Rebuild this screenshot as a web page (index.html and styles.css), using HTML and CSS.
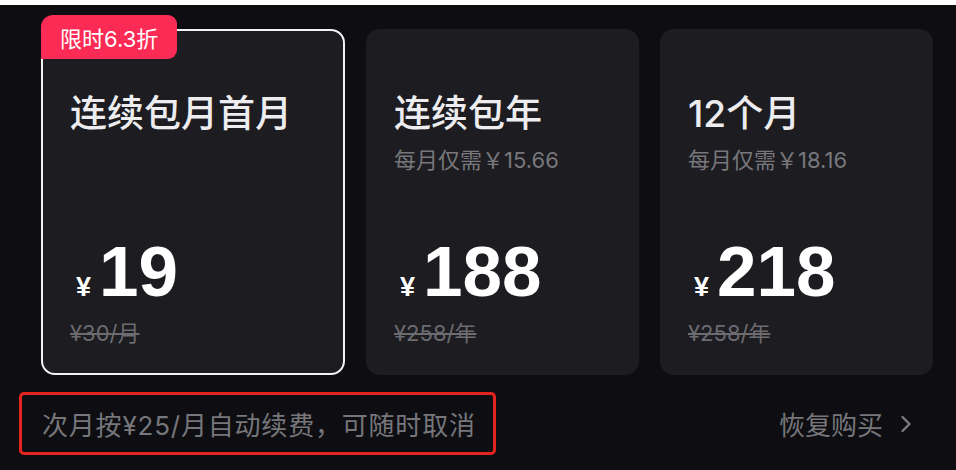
FILE: index.html
```html
<!DOCTYPE html>
<html lang="zh-CN">
<head>
<meta charset="utf-8">
<title>会员套餐</title>
<link rel="stylesheet" href="styles.css">
</head>
<body>
<div class="page">
  <div class="plans">
    <div class="card card-wide selected">
      <div class="badge">限时6.3折</div>
      <div class="title">连续包月首月</div>
      <div class="sub"></div>
      <div class="price"><span class="yen">¥</span><span class="num">19</span></div>
      <div class="orig">¥30/月</div>
    </div>
    <div class="card">
      <div class="title">连续包年</div>
      <div class="sub">每月仅需￥15.66</div>
      <div class="price"><span class="yen">¥</span><span class="num">188</span></div>
      <div class="orig">¥258/年</div>
    </div>
    <div class="card">
      <div class="title">12个月</div>
      <div class="sub">每月仅需￥18.16</div>
      <div class="price"><span class="yen">¥</span><span class="num">218</span></div>
      <div class="orig">¥258/年</div>
    </div>
  </div>
  <div class="footer">
    <div class="notice">次月按¥25/月自动续费，可随时取消</div>
    <div class="restore">恢复购买<svg class="chev" width="12" height="18" viewBox="0 0 12 18"><polyline points="2.5,2 9.5,9 2.5,16" fill="none" stroke="#7a7a7f" stroke-width="2.4" stroke-linecap="round" stroke-linejoin="round"/></svg></div>
  </div>
</div>
</body>
</html>
```
FILE: styles.css
```css
html, body {
  margin: 0;
  padding: 0;
  background: #ffffff;
}
body {
  font-family: Inter, "Noto Sans CJK SC", sans-serif;
}
.page {
  margin-top: 5px;
  height: 465px;
  background: #0e0e12;
  overflow: hidden;
}
.plans {
  display: flex;
  gap: 21px;
  padding: 24px 0 0 41px;
}
.card {
  position: relative;
  box-sizing: border-box;
  width: 273px;
  height: 346px;
  border: 2px solid transparent;
  border-radius: 14px;
  background: #1c1c21;
  padding: 0 26px;
  display: flex;
  flex-direction: column;
}
.card-wide {
  width: 304px;
  padding: 0 27px;
}
.selected {
  border-color: #f2f2f2;
}
.badge {
  position: absolute;
  left: -2px;
  top: -16px;
  height: 44px;
  padding: 0 19px;
  display: flex;
  align-items: center;
  background: #fc2b55;
  color: #ffffff;
  font-size: 22px;
  border-radius: 12px 9px 9px 0;
}
.title {
  margin-top: 61px;
  height: 44px;
  line-height: 44px;
  font-size: 37px;
  font-weight: 500;
  color: #ededef;
  white-space: nowrap;
}
.sub {
  margin-top: 10px;
  height: 28px;
  line-height: 28px;
  font-size: 22px;
  color: #77777c;
  white-space: nowrap;
}
.price {
  margin-top: 64px;
  height: 68px;
  display: flex;
  align-items: baseline;
  color: #ffffff;
  font-family: "Liberation Sans", Arial, sans-serif;
  font-weight: bold;
}
.yen {
  font-size: 27px;
  margin-left: 6px;
  margin-right: 8px;
}
.num {
  font-size: 71px;
  line-height: 68px;
}
.orig {
  margin-top: 13px;
  line-height: 28px;
  font-size: 22px;
  color: #6b6b70;
  text-decoration: line-through;
  white-space: nowrap;
}
.footer {
  display: flex;
  align-items: center;
  justify-content: space-between;
  margin: 17px 44px 0 19px;
}
.notice {
  box-sizing: border-box;
  width: 477px;
  height: 63px;
  border: 3px solid #e5231f;
  border-radius: 5px;
  padding-left: 20px;
  display: flex;
  align-items: center;
  font-size: 26px;
  letter-spacing: 0.8px;
  color: #76767b;
  white-space: nowrap;
}
.restore {
  display: flex;
  align-items: center;
  gap: 17px;
  font-size: 26px;
  color: #76767b;
}
.chev {
  display: block;
}
```
